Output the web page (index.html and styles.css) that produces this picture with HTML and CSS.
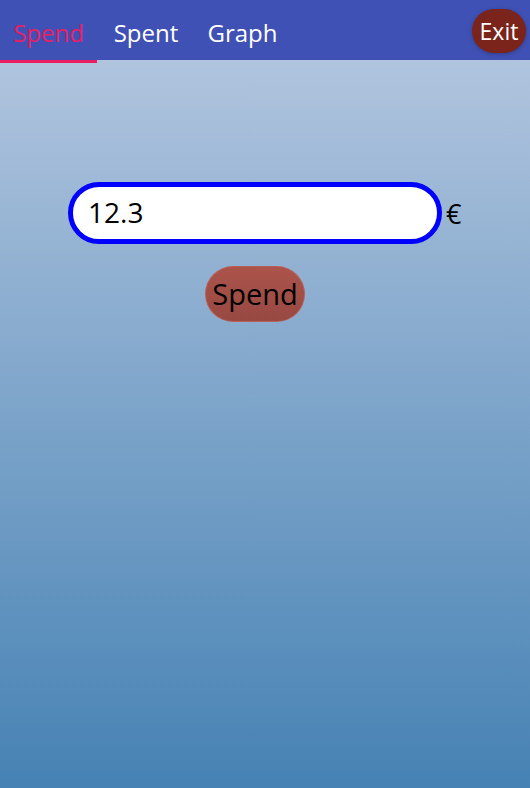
FILE: index.html
```html
<!DOCTYPE html>
<html>
<head>
<meta charset="utf-8">
<link rel="stylesheet" href="styles.css">
</head>
<body>
<div class="app">
  <header class="bar">
    <nav class="tabs">
      <div class="tab t1 active">Spend</div>
      <div class="tab t2">Spent</div>
      <div class="tab t3">Graph</div>
    </nav>
    <button class="exit">Exit</button>
  </header>
  <main class="content">
    <div class="row">
      <div class="field">12.3</div>
      <span class="cur">€</span>
    </div>
    <button class="spend">Spend</button>
  </main>
</div>
</body>
</html>
```
FILE: styles.css
```css
html, body { margin: 0; padding: 0; }
body {
  font-family: "Open Sans", "Noto Sans", sans-serif;
  width: 530px;
  height: 788px;
  overflow: hidden;
}
.app {
  height: 788px;
  display: flex;
  flex-direction: column;
  background: linear-gradient(to bottom, #b0c4de 60px, #4682b4 100%);
}
.bar {
  height: 60px;
  background: #3f51b5;
  display: flex;
  align-items: center;
  justify-content: space-between;
  flex-shrink: 0;
}
.tabs { display: flex; height: 60px; }
.tab {
  height: 60px;
  display: flex;
  align-items: center;
  justify-content: center;
  color: #fff;
  font-size: 24px;
  padding-top: 5px;
  box-sizing: border-box;
  position: relative;
}
.t1 { width: 97px; }
.t2 { width: 98px; }
.t3 { width: 95px; }
.tab.active { color: #e91e63; }
.tab.active::after {
  content: "";
  position: absolute;
  left: 0; right: 0; bottom: -3px;
  height: 3px;
  background: #e91e63;
}
.exit {
  margin-right: 4px;
  margin-top: 1px;
  width: 54px;
  height: 44px;
  border: none;
  border-radius: 22px;
  background: #7b241c;
  color: #fff;
  font-family: inherit;
  font-size: 23px;
  padding: 0;
  box-shadow: 0 1px 4px rgba(0,0,0,0.25);
}
.content {
  display: flex;
  flex-direction: column;
  align-items: flex-start;
  padding-top: 122px;
}
.row {
  display: flex;
  align-items: center;
  margin-left: 68px;
}
.field {
  width: 374px;
  height: 62px;
  box-sizing: border-box;
  border: 5px solid #0000ff;
  border-radius: 31px;
  background: #fff;
  font-size: 28px;
  display: flex;
  align-items: center;
  padding-left: 15px;
  padding-bottom: 2px;
  color: #000;
}
.cur {
  font-size: 27px;
  margin-left: 4px;
  color: #000;
}
.spend {
  margin-top: 22px;
  margin-left: 205px;
  width: 100px;
  height: 56px;
  border: 1px solid rgba(190,100,90,0.8);
  border-radius: 28px;
  background: linear-gradient(to bottom, #ab544b, #974942);
  color: #000;
  font-family: inherit;
  font-size: 29px;
  padding: 0 0 2px 0;
}
```
